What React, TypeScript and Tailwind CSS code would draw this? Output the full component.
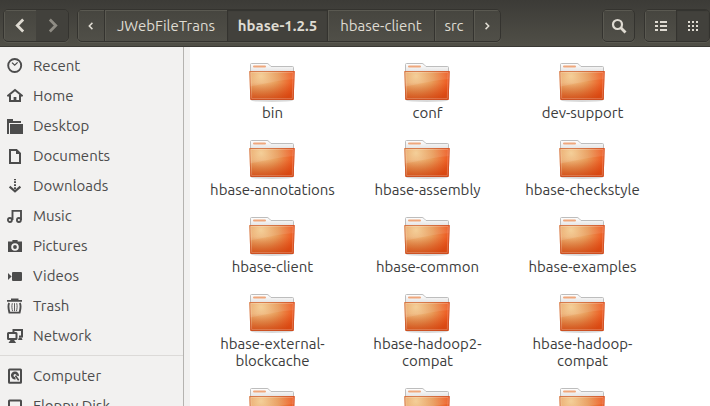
import React from "react";

const glyphs: Record<string, React.ReactNode> = {
  Recent: (
    <>
      <circle cx="7.7" cy="7.5" r="6.5" fill="none" stroke="currentColor" strokeWidth="1.9" />
      <path d="M5 4.6 7.7 7.2 10.6 4.4" fill="none" stroke="currentColor" strokeWidth="1.3" />
    </>
  ),
  Home: (
    <>
      <path d="M.4 8.2 8 2 15.6 8.2" fill="none" stroke="currentColor" strokeWidth="1.9" />
      <path d="M3 7v6.1h10V7" fill="none" stroke="currentColor" strokeWidth="2" />
      <path d="M6.6 9h2.8v5H6.6z" />
    </>
  ),
  Desktop: (
    <>
      <path d="M0 1h6v2h8v2H2v11H0z" />
      <path d="M3 6h13v10H3z" />
    </>
  ),
  Documents: (
    <>
      <path d="M3 2h6.5L13 5.5V15H3z" fill="none" stroke="currentColor" strokeWidth="2" />
      <path d="M9 1.5V6h4.5z" />
    </>
  ),
  Downloads: (
    <>
      <path d="M7 1h2v1.200H7zM7 3.200h2v1.800H7zM7 6.200h2v1.800H7zM7 9.200h2v1.800H7z" />
      <path d="M2.6 8.6 8 13.4l5.4-4.8" fill="none" stroke="currentColor" strokeWidth="2.1" />
    </>
  ),
  Music: (
    <>
      <circle cx="2.9" cy="12" r="2" fill="none" stroke="currentColor" strokeWidth="1.8" />
      <circle cx="11.9" cy="12" r="2" fill="none" stroke="currentColor" strokeWidth="1.8" />
      <path d="M5.500 12V2.9H14V12" fill="none" stroke="currentColor" strokeWidth="1.9" />
    </>
  ),
  Pictures: (
    <path
      fillRule="evenodd"
      d="M5.4 2h5.2v1.6H15V14H1V3.600h4.400zM8 5.200a3.800 3.800 0 1 0 0 7.600 3.800 3.800 0 0 0 0-7.600zM8 7.100a1.900 1.900 0 1 1 0 3.800 1.900 1.900 0 0 1 0-3.800z"
    />
  ),
  Videos: (
    <>
      <rect x="5" y="4" width="10" height="9" rx="1" />
      <path d="M1 5l3.600 3.500L1 12z" />
    </>
  ),
  Trash: (
    <>
      <path d="M4 .4h7.500v1.600H15v1.700H0V2h4z" />
      <path d="M2.200 5C.6 7.500 1.500 11 2.400 14.600h10.200C13.500 11 14.400 7.500 12.800 5" fill="none" stroke="currentColor" strokeWidth="1.9" />
      <path d="M5.300 5.200c-.8 3-.3 5.800.3 8M9.700 5.200c.8 3 .3 5.800-.3 8M7.500 5.200v8" fill="none" stroke="currentColor" strokeWidth=".9" />
    </>
  ),
  Network: (
    <>
      <path d="M6.500 4V2H15v6.500h-3" fill="none" stroke="currentColor" strokeWidth="2" />
      <path d="M12 9.500h2.500l1 2.500H11z" />
      <rect x="1" y="5" width="8.500" height="6" rx=".5" fill="none" stroke="currentColor" strokeWidth="2" />
      <path d="M3.500 12h3.600l2 3H1.500z" />
    </>
  ),
  Computer: (
    <>
      <rect x="2" y="1.400" width="12" height="13.400" rx=".5" fill="none" stroke="currentColor" strokeWidth="2" />
      <path
        fillRule="evenodd"
        d="M8 3.400a4 4 0 0 1 3.900 4.800L9.500 7.500A1.500 1.500 0 1 0 8 9l.8 2.300A4 4 0 1 1 8 3.400z"
      />
      <path d="M8.400 7.800l3.300 4.400" stroke="currentColor" strokeWidth="1.600" />
    </>
  ),
  "Floppy Disk": (
    <>
      <rect x="2" y="2.400" width="12" height="11.600" rx=".5" fill="none" stroke="currentColor" strokeWidth="2" />
      <path d="M4.500 10h7v4h-7z" />
    </>
  ),
};

const places = [
  "Recent",
  "Home",
  "Desktop",
  "Documents",
  "Downloads",
  "Music",
  "Pictures",
  "Videos",
  "Trash",
  "Network",
];
const devices = ["Computer", "Floppy Disk"];

const folders = [
  "bin",
  "conf",
  "dev-support",
  "hbase-annotations",
  "hbase-assembly",
  "hbase-checkstyle",
  "hbase-client",
  "hbase-common",
  "hbase-examples",
  "hbase-external-blockcache",
  "hbase-hadoop2-compat",
  "hbase-hadoop-compat",
  "",
  "",
  "",
];

const group =
  "flex h-[33px] overflow-hidden rounded-[5px] border border-[#34332f] bg-linear-to-b from-[#46453f] to-[#504f48] shadow-[0_1px_0_#5b5a52]";
const cell =
  "flex items-center justify-center shadow-[inset_1px_1px_0_#5a5951]";
const pressed = "flex items-center justify-center bg-[#42413c] shadow-[inset_0_1px_1px_#34332f]";

function Chevron({ right, small }: { right?: boolean; small?: boolean }) {
  const size = small ? 8 : 15;
  return (
    <svg width={size} height={size} viewBox="0 0 14 14" aria-hidden="true">
      <path
        d={right ? "M4.500 1.500 10 7l-5.500 5.500" : "M9.500 1.500 4 7l5.500 5.500"}
        fill="none"
        stroke="currentColor"
        strokeWidth="2.600"
      />
    </svg>
  );
}

function FolderPicture() {
  return (
    <svg width="47" height="42" viewBox="0 0 47 42" aria-hidden="true">
      <ellipse cx="23" cy="38.500" rx="21" ry="1.500" fill="#000" opacity=".15" />
      <path d="M1.500 12V2.500q0-1 1-1H18q1 0 1.800.8l2.200 2.200h21.500q1 0 1 1V12z" fill="url(#paper)" stroke="#bdbdbd" />
      <rect x="4" y="3.500" width="13" height="2" rx="1" fill="#efa77c" />
      <path d="M.3 9h45.400l-1 28q0 1-1 1H2.300q-1 0-1-1z" fill="url(#cover)" />
      <path d="M.3 9h45.400l-1 28q0 1-1 1H2.300q-1 0-1-1z" fill="url(#shade)" />
      <path d="M.3 9h45.400l-.4 8C30 18 15 22 1 24.500z" fill="url(#gloss)" />
      <path d="M.8 9.500h44.400l-1 27.500q0 .5-.5.500H2.300q-.5 0-.5-.5z" fill="none" stroke="#c8522a" strokeOpacity=".6" />
      <path d="M1.800 10.500h42.400l-.9 26H2.700z" fill="none" stroke="#fff" strokeOpacity=".2" />
    </svg>
  );
}

function Place({ name }: { name: string }) {
  return (
    <li>
      <a href="#" className="flex h-[30px] items-center gap-2.5 pl-[7px] whitespace-nowrap">
        <svg width="16" height="16" viewBox="0 0 16 16" fill="currentColor" className="shrink-0" aria-hidden="true">
          {glyphs[name]}
        </svg>
        {name}
      </a>
    </li>
  );
}

export default function App() {
  return (
    <div className="flex h-screen flex-col overflow-hidden bg-white font-['Ubuntu','Noto_Sans',sans-serif] text-[15px] leading-[17px] text-[#3c3c3c]">
      <svg width="0" height="0" className="absolute" aria-hidden="true">
        <defs>
          <linearGradient id="paper" x1="0" y1="0" x2="0" y2="1">
            <stop offset="0" stopColor="#fff" />
            <stop offset="1" stopColor="#dcdcdc" />
          </linearGradient>
          <radialGradient id="cover" gradientUnits="userSpaceOnUse" cx="12" cy="14" r="34">
            <stop offset="0" stopColor="#f3cb90" />
            <stop offset=".5" stopColor="#e89a58" />
            <stop offset="1" stopColor="#ee541b" />
          </radialGradient>
          <linearGradient id="shade" x1="0" y1="0" x2="0" y2="1">
            <stop offset=".4" stopColor="#c8400c" stopOpacity="0" />
            <stop offset="1" stopColor="#c8400c" stopOpacity=".7" />
          </linearGradient>
          <linearGradient id="gloss" x1="0" y1="0" x2="0" y2="1">
            <stop offset="0" stopColor="#fff" stopOpacity=".06" />
            <stop offset="1" stopColor="#fff" stopOpacity=".12" />
          </linearGradient>
        </defs>
      </svg>

      <header className="flex h-[47px] shrink-0 items-start border-b border-[#3a3934] bg-linear-to-b from-[#3c3b37] to-[#504f47] pt-[9px] pl-[3px] text-[#dfdbd2]">
        <nav aria-label="History" className={`${group} mr-2`}>
          <button aria-label="Back" className={`${cell} w-8`}>
            <Chevron />
          </button>
          <button aria-label="Forward" disabled className="flex w-8 items-center justify-center bg-[#42413c] text-[#8f8c84]">
            <Chevron right />
          </button>
        </nav>
        <nav aria-label="Path" className={group}>
          <button aria-label="Scroll path left" className={`${cell} w-[26px]`}>
            <Chevron small />
          </button>
          <button className={`${cell} min-w-[123px] border-l border-[#34332f]`}>JWebFileTrans</button>
          <button className={`${pressed} min-w-[100px] border-l border-[#34332f] font-bold`}>hbase-1.2.5</button>
          <button className={`${cell} min-w-[107px] border-l border-[#34332f]`}>hbase-client</button>
          <button className={`${cell} min-w-[39px] border-l border-[#34332f]`}>src</button>
          <button aria-label="Scroll path right" className={`${cell} w-[27px] border-l border-[#34332f]`}>
            <Chevron small right />
          </button>
        </nav>
        <div className="ml-auto flex gap-[9px]">
          <div className={group}>
            <button aria-label="Search" className={`${cell} w-[31px]`}>
              <svg width="16" height="16" viewBox="0 0 16 16" aria-hidden="true" fill="none" stroke="currentColor">
                <circle cx="6.500" cy="6.500" r="4.500" strokeWidth="2.200" />
                <path d="M9.800 9.800 14.500 14.500" strokeWidth="2.800" />
              </svg>
            </button>
          </div>
          <div className={group}>
            <button aria-label="List view" className={`${cell} w-[31px]`}>
              <svg width="12" height="10" viewBox="0 0 12 10" aria-hidden="true" fill="currentColor">
                <path d="M0 0h3v2H0zM5 0h7v2H5zM0 4h3v2H0zM5 4h7v2H5zM0 8h3v2H0zM5 8h7v2H5z" />
              </svg>
            </button>
            <button aria-label="Icon view" aria-pressed="true" className={`${pressed} w-[33px] border-l border-[#34332f]`}>
              <svg width="10" height="10" viewBox="0 0 10 10" aria-hidden="true" fill="currentColor">
                <path d="M0 0h2v2H0zM4 0h2v2H4zM8 0h2v2H8zM0 4h2v2H0zM4 4h2v2H4zM8 4h2v2H8zM0 8h2v2H0zM4 8h2v2H4zM8 8h2v2H8z" />
              </svg>
            </button>
          </div>
        </div>
      </header>

      <div className="flex min-h-0 flex-1">
        <aside className="w-[184px] shrink-0 overflow-hidden border-r border-[#b5b3b0] bg-[#f2f1f0] pt-1 leading-[18px] text-[#4c4c4c]">
          <ul>
            {places.map((name) => (
              <Place key={name} name={name} />
            ))}
          </ul>
          <hr className="mt-1 mb-[5px] border-[#dcdad8]" />
          <ul>
            {devices.map((name) => (
              <Place key={name} name={name} />
            ))}
          </ul>
        </aside>
        <main className="min-w-0 flex-1 overflow-hidden border-l-[6px] border-[#f2f1f0] bg-white pt-[15px] pl-[5px]">
          <ul className="grid grid-cols-[repeat(auto-fill,155px)] gap-y-[18px]">
            {folders.map((name, i) => (
              <li key={i} className="flex flex-col items-center px-2.5 text-center">
                <FolderPicture />
                <span>{name}</span>
              </li>
            ))}
          </ul>
        </main>
      </div>
    </div>
  );
}
